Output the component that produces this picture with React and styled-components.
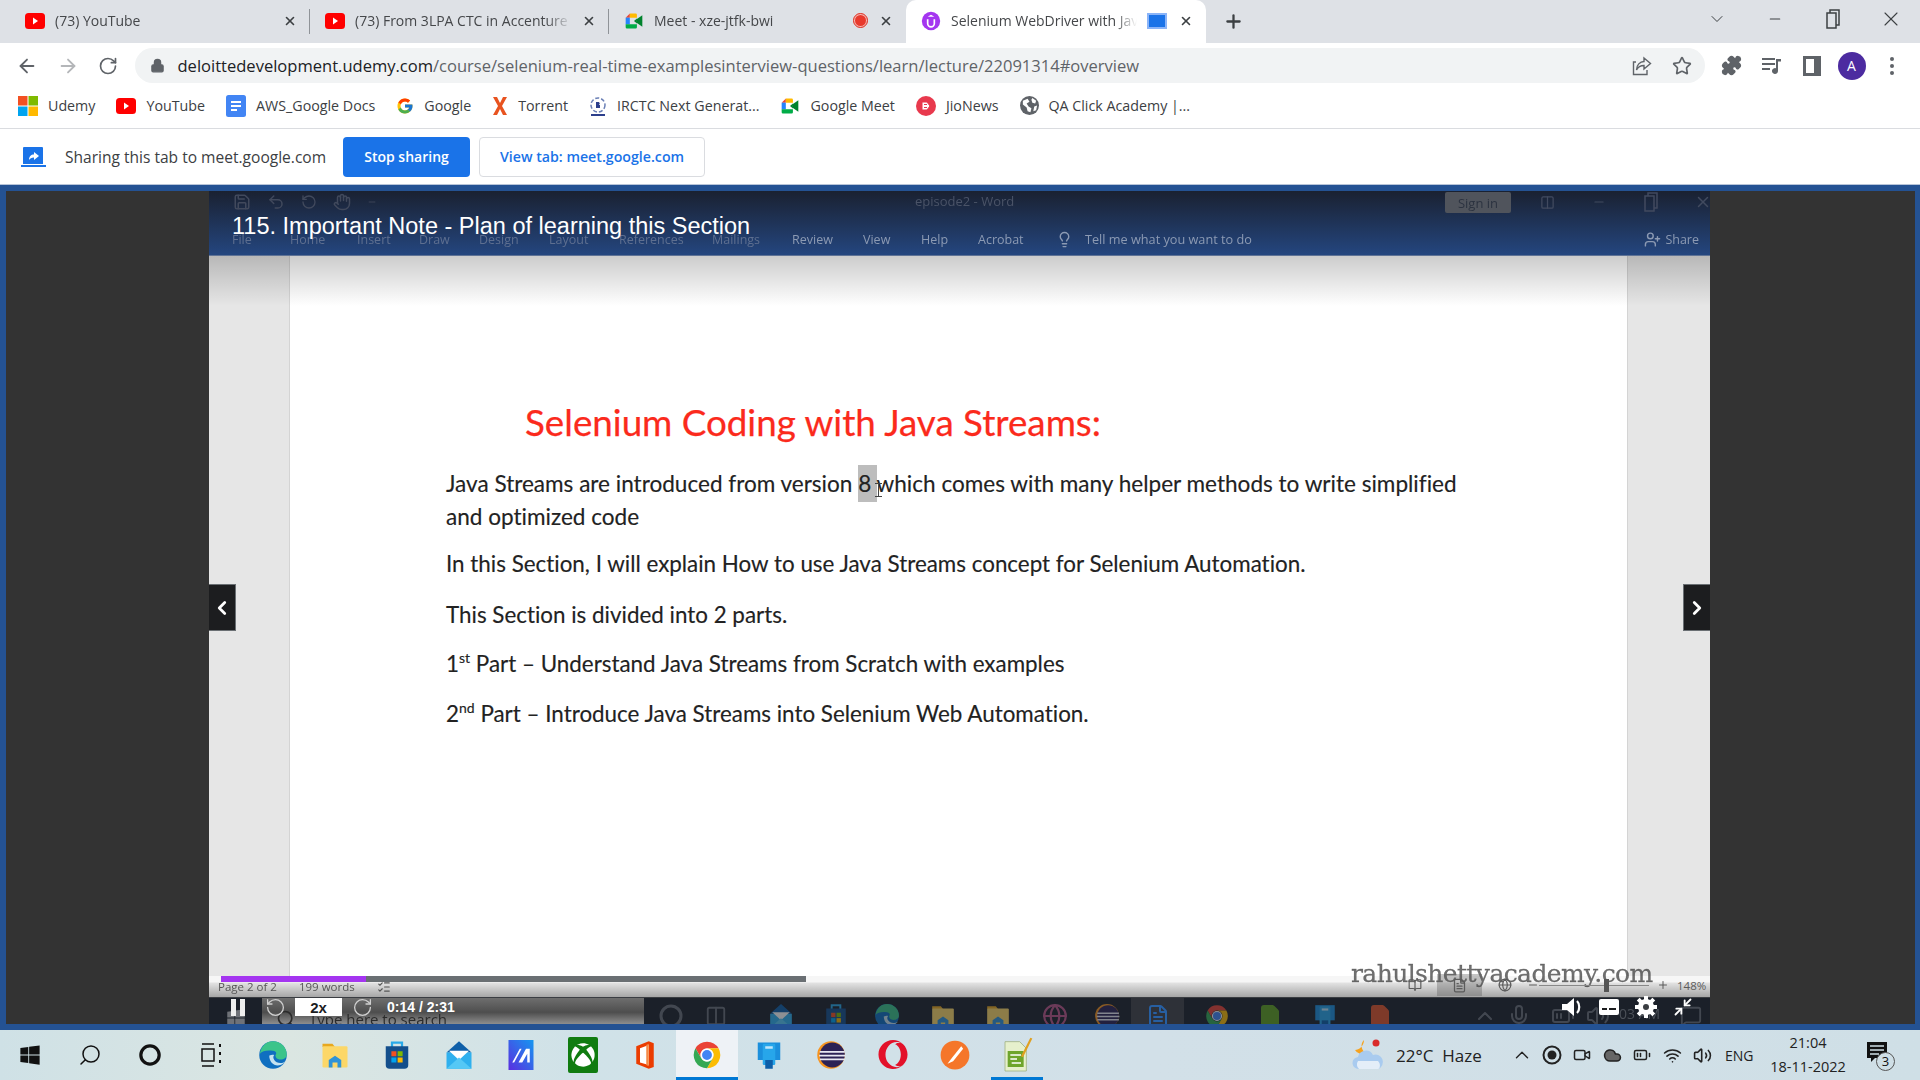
import React from "react";
import styled, { createGlobalStyle } from "styled-components";
import {
  ArrowLeft, ArrowRight, RotateCw, RotateCcw, Lock, Star, Puzzle, X, Plus, ChevronDown, ChevronUp, Minus,
  ChevronLeft, ChevronRight, Lightbulb, UserPlus, Save, Undo2, Hand, BookOpen, FileText, Globe, Search, Circle,
  Volume2, Mic, BatteryMedium, Wifi, Cloud, Video as VideoCam, MessageSquare, ListChecks, Columns2, Minimize2,
} from "lucide-react";
import { FaWindows, FaXbox, FaOpera } from "react-icons/fa";
import { FcGoogle } from "react-icons/fc";

const UI = `"Open Sans", "Noto Sans", sans-serif`;

const Global = createGlobalStyle`
  html, body { margin: 0; padding: 0; width: 1920px; height: 1080px; overflow: hidden; background: #fff; }
  * { box-sizing: border-box; }
  body { font-family: ${UI}; }
`;

const Page = styled.div`
  width: 1920px;
  height: 1080px;
  display: flex;
  flex-direction: column;
  overflow: hidden;
`;

/* ---------- tabs ---------- */
const TabStrip = styled.div`
  height: 43px;
  background: #dee1e6;
  display: flex;
  align-items: stretch;
`;
const Tab = styled.div`
  width: ${(p) => p.$w}px;
  padding: 0 13px 2px ${(p) => p.$pad}px;
  display: flex;
  align-items: center;
  gap: 10px;
  font-size: 14px;
  color: #45474a;
  position: relative;
  background: ${(p) => (p.$active ? "#fff" : "transparent")};
  border-radius: ${(p) => (p.$active ? "10px 10px 0 0" : "0")};
  &::after {
    content: "";
    display: ${(p) => (p.$sep ? "block" : "none")};
    position: absolute;
    right: 0;
    top: 9px;
    height: 25px;
    width: 1px;
    background: #8f9398;
  }
`;
const TabTitle = styled.span`
  flex: 1;
  min-width: 0;
  white-space: nowrap;
  overflow: hidden;
  -webkit-mask-image: linear-gradient(90deg, #000 88%, transparent 100%);
  mask-image: linear-gradient(90deg, #000 88%, transparent 100%);
`;
const TabClose = styled(X)`
  width: 14px;
  height: 14px;
  color: #3c4043;
  stroke-width: 2.8;
  flex: none;
`;
const RecDot = styled.span`
  width: 15px;
  height: 15px;
  flex: none;
  border-radius: 50%;
  background: #e8392c;
  border: 2px solid #f7b7b1;
  outline: 1px solid #d93025;
  outline-offset: -1px;
  margin-right: 1px;
`;
const ShareSquare = styled.span`
  width: 20px;
  height: 16px;
  flex: none;
  background: #1a73e8;
  border: 2px solid #8ab4f8;
  margin-right: 2px;
`;
const NewTab = styled(Plus)`
  width: 21px;
  height: 21px;
  color: #3c4043;
  stroke-width: 2.6;
  margin: 11px 0 0 17px;
`;
const WinControls = styled.div`
  margin-left: auto;
  display: flex;
  align-items: flex-start;
  padding: 9px 0 0 0;
  color: #3c4043;
`;
const WinSlot = styled.div`
  width: 58px;
  height: 20px;
  display: flex;
  align-items: center;
  justify-content: center;
`;

/* ---------- address row ---------- */
const NavRow = styled.div`
  height: 41px;
  padding: 5px 0 0 7px;
  background: #fff;
  display: flex;
  align-items: flex-start;
`;
const NavBtn = styled.div`
  width: 40.5px;
  height: 35px;
  display: flex;
  align-items: center;
  justify-content: center;
  color: ${(p) => (p.$off ? "#b4b6b9" : "#5f6368")};
`;
const Omnibox = styled.div`
  width: 1570px;
  height: 35px;
  margin-left: 6px;
  border-radius: 18px;
  background: #f1f3f4;
  display: flex;
  align-items: center;
  padding-left: 15px;
`;
const Url = styled.div`
  margin-left: 13px;
  font-size: 16.55px;
  color: #5f6368;
  white-space: nowrap;
  & b { font-weight: 400; color: #202124; }
`;
const OmniActions = styled.div`
  margin-left: auto;
  display: flex;
  color: #5f6368;
  padding-right: 3px;
`;
const OmniBtn = styled.div`
  width: 40px;
  height: 35px;
  display: flex;
  align-items: center;
  justify-content: center;
`;
const ToolBtns = styled.div`
  margin-left: 7px;
  display: flex;
  color: #5f6368;
`;
const Avatar = styled.div`
  width: 28px;
  height: 28px;
  border-radius: 50%;
  background: #4c2ba0;
  color: #fff;
  font-size: 14px;
  display: flex;
  align-items: center;
  justify-content: center;
`;

/* ---------- bookmarks ---------- */
const Bookmarks = styled.div`
  height: 45px;
  padding: 0 0 1px 18px;
  background: #fff;
  border-bottom: 1px solid #dadce0;
  display: flex;
  align-items: center;
  gap: 21px;
`;
const Bookmark = styled.div`
  display: flex;
  align-items: center;
  gap: 10px;
  font-size: 14.25px;
  color: #3c4043;
  white-space: nowrap;
`;

/* ---------- share bar ---------- */
const ShareBar = styled.div`
  height: 55px;
  background: #fff;
  display: flex;
  align-items: center;
  padding: 0 0 0 21px;
`;
const ShareText = styled.div`
  margin: 0 17px 0 19px;
  width: 261px;
  font-size: 15.55px;
  color: #3c4043;
  white-space: nowrap;
`;
const StopButton = styled.div`
  width: 127px;
  height: 40px;
  border-radius: 4px;
  background: #1a73e8;
  color: #fff;
  font-size: 14px;
  font-weight: 600;
  display: flex;
  align-items: center;
  justify-content: center;
`;
const ViewButton = styled.div`
  width: 226px;
  height: 40px;
  margin-left: 9px;
  border: 1px solid #dadce0;
  border-radius: 4px;
  color: #1a73e8;
  font-size: 14.2px;
  font-weight: 600;
  display: flex;
  align-items: center;
  justify-content: center;
`;

/* ---------- captured stage ---------- */
const Stage = styled.div`
  height: 846px;
  background: #245293;
  border-top: 1px solid #b7c4d8;
  padding: 6px 5px 6px 6px;
  display: flex;
`;
const SidePanel = styled.div`
  width: ${(p) => p.$w}px;
  background: #333;
`;
const Video = styled.div`
  width: 1501px;
  height: 833px;
  position: relative;
  overflow: hidden;
  display: flex;
  flex-direction: column;
`;
const Ribbon = styled.div`
  height: 65px;
  flex: none;
  background: linear-gradient(#1a2131, #24467f);
  border-bottom: 1px solid #5f7396;
  display: flex;
  flex-direction: column;
  filter: blur(0.45px);
`;
const RibbonTop = styled.div`
  height: 22px;
  position: relative;
  display: flex;
  align-items: center;
  padding: 0 0 0 24px;
  color: #41495c;
  gap: 16px;
  font-size: 13px;
`;
const DocName = styled.div`
  position: absolute;
  left: 706px;
  top: 1px;
  font-size: 13px;
  color: #4a5367;
`;
const SignIn = styled.div`
  position: absolute;
  left: 1236px;
  top: 1px;
  width: 66px;
  height: 21px;
  background: #50545c;
  color: #2c3340;
  border-radius: 2px;
  font-size: 13px;
  display: flex;
  align-items: center;
  justify-content: center;
`;
const RibbonWin = styled.div`
  position: absolute;
  left: 1312px;
  top: 3px;
  display: flex;
  color: #414a5f;
`;
const RibbonWinSlot = styled.div`
  width: 52px;
  height: 16px;
  display: flex;
  align-items: center;
  justify-content: center;
`;
const RibbonTabs = styled.div`
  display: flex;
  align-items: center;
  height: 20px;
  margin-top: 16px;
  padding-left: 23px;
  font-size: 12.5px;
  color: #8c9ab3;
`;
const RibbonTab = styled.div`
  width: ${(p) => p.$w}px;
  flex: none;
  white-space: nowrap;
  color: ${(p) => (p.$dim ? "#5e6f90" : "#8c9ab3")};
`;
const TellMe = styled.div`
  display: flex;
  align-items: center;
  gap: 12px;
  white-space: nowrap;
  margin-left: -8px;
  font-size: 12.7px;
`;
const RibbonShare = styled.div`
  margin-left: auto;
  margin-right: 11px;
  display: flex;
  align-items: center;
  gap: 4px;
`;

const Doc = styled.div`
  height: 720px;
  flex: none;
  position: relative;
  display: flex;
  background: #e6e6e6;
`;
const Sheet = styled.div`
  width: 1339px;
  margin-left: 80px;
  background: #fff;
  border-left: 1px solid #d4d4d4;
  border-right: 1px solid #d4d4d4;
  padding: 144px 0 0 156px;
  font-family: Lato, "Open Sans", sans-serif;
  font-variant-ligatures: none;
`;
const TopShade = styled.div`
  position: absolute;
  left: 0;
  right: 0;
  top: 0;
  height: 50px;
  background: linear-gradient(rgba(0, 0, 0, 0.2), rgba(0, 0, 0, 0));
`;
const Heading = styled.h1`
  margin: 0 0 0 79px;
  font-size: 36.75px;
  line-height: 44px;
  font-weight: 400;
  color: #fb2a1c;
  white-space: nowrap;
  -webkit-text-stroke: 0.25px #fb2a1c;
`;
const Para = styled.p`
  margin: ${(p) => p.$top}px 0 0;
  font-size: ${(p) => p.$size || 22.4}px;
  line-height: 33px;
  color: #222;
  white-space: nowrap;
  -webkit-text-stroke: 0.15px #222;
  & sup { font-size: 14px; line-height: 0; vertical-align: 9px; }
`;
const Selected = styled.span`
  background: #bdbdbd;
  padding: 5px 0;
`;
const IBeam = styled.span`
  position: absolute;
  left: 666px;
  top: 227px;
  width: 7px;
  height: 14px;
  border-top: 1px solid #444;
  border-bottom: 1px solid #444;
  &::after {
    content: "";
    position: absolute;
    left: 3px;
    top: 0;
    bottom: 0;
    width: 1px;
    background: #444;
  }
`;

const StatusBar = styled.div`
  height: 22px;
  flex: none;
  background: linear-gradient(#f6f6f6 6px, #e2e2e2 7px, #a6a6a6 100%);
  display: flex;
  align-items: center;
  padding: 0 0 0 9px;
  font-size: 11.5px;
  color: #555;
  filter: blur(0.3px);
  border-bottom: 1px solid #3a3d42;
`;
const StatusItem = styled.div`
  margin-right: 22px;
  white-space: nowrap;
`;
const StatusRight = styled.div`
  position: absolute;
  left: 1183px;
  top: 783px;
  height: 22px;
  display: flex;
  align-items: center;
  color: #5b5b5b;
  font-size: 11.5px;
`;
const ViewSlot = styled.div`
  width: ${(p) => p.$w}px;
  height: 22px;
  display: flex;
  align-items: center;
  justify-content: center;
  background: ${(p) => (p.$on ? "rgba(90,90,90,.35)" : "transparent")};
`;
const Slider = styled.div`
  width: 110px;
  height: 1px;
  background: #888;
  position: relative;
  &::after {
    content: "";
    position: absolute;
    left: 65px;
    top: -6px;
    width: 5px;
    height: 13px;
    background: #555;
  }
`;

const VTaskbar = styled.div`
  height: 26px;
  flex: none;
  display: flex;
  align-items: stretch;
  background: #1b2029;
  overflow: hidden;
  filter: blur(0.7px);
`;
const VStart = styled.div`
  width: 53px;
  display: flex;
  align-items: center;
  justify-content: center;
  padding-top: 14px;
  color: #6f7278;
`;
const VSearch = styled.div`
  width: 382px;
  background: linear-gradient(#6e6e6e, #4e4e4e 55%, #8e8e8e);
  display: flex;
  align-items: center;
  padding: 16px 0 0 14px;
  gap: 13px;
  color: #2b2b2b;
  font-size: 15px;
  white-space: nowrap;
`;
const VSlot = styled.div`
  width: 26px;
  flex: none;
  margin-left: ${(p) => p.$ml}px;
  display: flex;
  align-items: center;
  justify-content: center;
  padding-top: 10px;
  opacity: 0.5;
  color: #6a6f78;
  position: relative;
`;
const VActive = styled.div`
  width: 53px;
  margin: 0 -14px 0 ${(p) => p.$ml - 13}px;
  flex: none;
  background: #33363c;
  display: flex;
  align-items: center;
  justify-content: center;
  padding-top: 10px;
  opacity: 0.8;
`;
const VClock = styled.div`
  margin-left: 8px;
  padding-top: 6px;
  color: #4b5058;
  font-size: 14px;
  white-space: nowrap;
`;

const VideoTitle = styled.div`
  position: absolute;
  left: 23px;
  top: 20px;
  color: #fff;
  font-family: "Liberation Sans", Arial, sans-serif;
  font-size: 23.5px;
  line-height: 30px;
  white-space: nowrap;
`;
const SlideArrow = styled.div`
  position: absolute;
  top: 393px;
  ${(p) => p.$side}: 0;
  width: 27px;
  height: 47px;
  background: #1c1d1f;
  border: 1px solid #6a6f73;
  border-${(p) => p.$side}: 0;
  color: #fff;
  display: flex;
  align-items: center;
  justify-content: center;
`;
const ProgressTrack = styled.div`
  position: absolute;
  left: 12px;
  top: 785px;
  width: 585px;
  height: 6px;
  background: #6a6f73;
`;
const ProgressFill = styled.div`
  height: 100%;
  width: ${(p) => p.$pct}%;
  background: #a435f0;
`;
const Watermark = styled.div`
  position: absolute;
  left: 1142px;
  top: 768px;
  font-family: "DejaVu Serif", "Liberation Serif", serif;
  font-size: 25px;
  line-height: 30px;
  letter-spacing: -0.6px;
  color: rgba(55, 55, 55, 0.72);
  -webkit-text-stroke: 0.3px rgba(55, 55, 55, 0.6);
  white-space: nowrap;
  filter: blur(0.6px);
`;
const Controls = styled.div`
  position: absolute;
  left: 0;
  right: 0;
  bottom: 0;
  height: 34px;
  padding: 0 9px;
  display: flex;
  align-items: center;
  color: #fff;
`;
const CtlSlot = styled.div`
  width: ${(p) => p.$w}px;
  flex: none;
  height: 30px;
  display: flex;
  align-items: center;
  justify-content: center;
  color: ${(p) => p.$tone || "#fff"};
`;
const PauseBars = styled.div`
  width: 14px;
  height: 17px;
  border-left: 5px solid #eee;
  border-right: 5px solid #eee;
`;
const Speed = styled.div`
  width: 47px;
  height: 18px;
  background: #fff;
  color: #1c1d1f;
  font-family: "Liberation Sans", Arial, sans-serif;
  font-weight: 700;
  font-size: 15px;
  display: flex;
  align-items: center;
  justify-content: center;
  margin-left: 3px;
`;
const Time = styled.div`
  margin-left: 5px;
  font-family: "Liberation Sans", Arial, sans-serif;
  font-weight: 700;
  font-size: 14px;
  white-space: nowrap;
`;
const CtlRight = styled.div`
  margin-left: auto;
  display: flex;
`;
const Caption = styled.div`
  width: 20px;
  height: 16px;
  background: #fff;
  border-radius: 2px;
  padding: 9px 3px 0;
  &::after {
    content: "";
    display: block;
    height: 2px;
    background: linear-gradient(90deg, #1c1d1f 0 5px, transparent 5px 7px, #1c1d1f 7px);
  }
`;

/* ---------- windows taskbar ---------- */
const Taskbar = styled.div`
  height: 50px;
  display: flex;
  align-items: stretch;
  background: linear-gradient(90deg, #cfe1e6 0, #dbe6e2 15%, #d0e2e8 30%, #d2e0e8 60%, #cfdfe6 100%);
`;
const TaskSlot = styled.div`
  width: ${(p) => p.$w}px;
  margin: 0 ${(p) => p.$mx || 0}px;
  flex: none;
  display: flex;
  align-items: center;
  justify-content: center;
  color: #111;
  background: ${(p) => (p.$active ? "#eef2f6" : "transparent")};
  border-bottom: 3px solid ${(p) => (p.$under ? "#0078d4" : "transparent")};
  border-top: 3px solid transparent;
`;
const Tray = styled.div`
  flex: 1;
  display: flex;
  align-items: center;
  padding-left: 303px;
  color: #222;
`;
const Weather = styled.div`
  display: flex;
  align-items: center;
  gap: 11px;
  font-size: 17px;
  color: #222;
  width: 156px;
  white-space: nowrap;
`;
const TraySlot = styled.div`
  width: 30px;
  flex: none;
  display: flex;
  align-items: center;
  justify-content: center;
`;
const Lang = styled.div`
  margin-left: 8px;
  font-size: 14px;
  width: 38px;
`;
const Clock = styled.div`
  width: 90px;
  text-align: center;
  font-size: 14.5px;
  line-height: 24px;
  color: #222;
`;
const Notif = styled.div`
  margin-left: 14px;
  position: relative;
  width: 22px;
  height: 26px;
`;
const NotifBadge = styled.span`
  position: absolute;
  left: 9px;
  top: 10px;
  width: 19px;
  height: 19px;
  border-radius: 50%;
  border: 1px solid #555;
  background: #cfdfe6;
  font-size: 13px;
  line-height: 17px;
  text-align: center;
  color: #111;
`;

/* ---------- brand drawings ---------- */
const Yt = ({ s = 20 }) => (
  <svg width={s} height={s * 0.8} viewBox="0 0 20 16" style={{ flex: "none" }}>
    <rect width="20" height="16" rx="3.5" fill="#f00" />
    <path d="M8 4.5l5 3.5-5 3.5z" fill="#fff" />
  </svg>
);
const Meet = ({ s = 20 }) => (
  <svg width={s} height={s} viewBox="0 0 24 24" style={{ flex: "none" }}>
    <path d="M7 3 2 8h5z" fill="#ea4335" />
    <path d="M7 3h7a1.5 1.5 0 0 1 1.5 1.5V8H7z" fill="#ffba00" />
    <rect x="2" y="8" width="5" height="8" fill="#2684fc" />
    <path d="M2 16v3.5A1.5 1.5 0 0 0 3.5 21H14a1.5 1.5 0 0 0 1.5-1.5V16z" fill="#00ac47" />
    <path d="M15.5 9.5 22 5v14l-6.500-4.500z" fill="#00832d" />
    <path d="M12 12l3.500-3v6z" fill="#00832d" />
  </svg>
);
const UdemyFav = () => (
  <svg width="20" height="20" viewBox="0 0 24 24" style={{ flex: "none" }}>
    <circle cx="12" cy="12" r="11" fill="#a435f0" />
    <path d="M8 10v5a4 4 0 0 0 8 0v-5" fill="none" stroke="#fff" strokeWidth="2" />
    <path d="M12 4.500 16 7H8z" fill="#fff" />
  </svg>
);
const MsLogo = () => (
  <svg width="20" height="20" viewBox="0 0 20 20" style={{ flex: "none" }}>
    <rect width="9.500" height="9.500" fill="#f25022" />
    <rect x="10.500" width="9.500" height="9.500" fill="#7fba00" />
    <rect y="10.500" width="9.500" height="9.500" fill="#00a4ef" />
    <rect x="10.500" y="10.500" width="9.500" height="9.500" fill="#ffb900" />
  </svg>
);
const DocsIcon = () => (
  <svg width="20" height="22" viewBox="0 0 20 22" style={{ flex: "none" }}>
    <rect width="20" height="22" rx="2.500" fill="#4285f4" />
    <path d="M5 7h10M5 11h10M5 15h6" stroke="#fff" strokeWidth="2" />
  </svg>
);
const Torrent = () => (
  <svg width="16" height="20" viewBox="0 0 16 20" style={{ flex: "none" }}>
    <path d="M1 1h4l3 6 3-6h4l-5 9 5 9h-4l-3-6-3 6H1l5-9z" fill="#e8531f" />
  </svg>
);
const Irctc = () => (
  <svg width="18" height="22" viewBox="0 0 18 22" style={{ flex: "none" }}>
    <circle cx="9" cy="10" r="7" fill="none" stroke="#6a7fb5" strokeWidth="1.500" strokeDasharray="4 2" />
    <path d="M7 7h3a2 2 0 0 1 0 3H7zM7 10h4v3H7z" fill="#2d3f8c" />
    <path d="M2 20h14" stroke="#2d3f8c" strokeWidth="2" />
  </svg>
);
const Jio = () => (
  <svg width="20" height="20" viewBox="0 0 20 20" style={{ flex: "none" }}>
    <circle cx="10" cy="10" r="10" fill="#e8394d" />
    <path d="M6 6h5l3 4-3 4H6zM8 8.500h3M8 11.500h3" fill="#fff" stroke="#e8394d" strokeWidth="1" />
  </svg>
);
const QaGlobe = () => (
  <svg width="19" height="19" viewBox="0 0 20 20" style={{ flex: "none" }}>
    <circle cx="10" cy="10" r="10" fill="#5f6368" />
    <path d="M3 5l5-2 2 3-3 2 2 3 3 2-1 4-3-1-1-4-4-3zM13 2l4 3-1 3-3-1-1-3zM15 11l3-1-1 5-3 1z" fill="#fff" />
  </svg>
);
const ShareIcon = () => (
  <svg width="25" height="22" viewBox="0 0 25 22" style={{ flex: "none" }}>
    <path d="M3 1h18a1 1 0 0 1 1 1v16H2V2a1 1 0 0 1 1-1z" fill="#1a73e8" />
    <path d="M0 19h25v2H0z" fill="#1a73e8" />
    <path d="M13 6l5 4-5 4v-2.500c-2.500 0-4 1-5 2.500 0-3.500 2-5.500 5-5.500z" fill="#fff" />
  </svg>
);
const PageShare = () => (
  <svg width="20" height="20" viewBox="0 0 20 20" fill="none" stroke="#5f6368" strokeWidth="1.400" style={{ flex: "none" }}>
    <path d="M4 6H1.500v12.500H15V14" />
    <path d="M12 2l6.500 5.500L12 13V9.500C8.500 9.500 6 11 4.500 14 4.500 9 8 5.500 12 5.500z" />
  </svg>
);
const MediaIcon = () => (
  <svg width="20" height="18" viewBox="0 0 20 18" fill="#5f6368" style={{ flex: "none" }}>
    <path d="M0 1h13v2H0zM0 6h13v2H0zM0 11h8v2H0zM14 2h5v2.500h-3V14a3 3 0 1 1-2-2.800z" />
  </svg>
);
const SideIcon = () => (
  <svg width="18" height="20" viewBox="0 0 18 20" style={{ flex: "none" }}>
    <path d="M1.500 1.500h15v17h-15z" fill="none" stroke="#5f6368" strokeWidth="3" />
    <rect x="11" y="1.500" width="5.500" height="17" fill="#5f6368" />
  </svg>
);
const Kebab = () => (
  <svg width="4" height="18" viewBox="0 0 4 18" fill="#5f6368">
    <circle cx="2" cy="2" r="2" />
    <circle cx="2" cy="9" r="2" />
    <circle cx="2" cy="16" r="2" />
  </svg>
);
const Restore = () => (
  <svg width="14" height="22" viewBox="0 0 14 22" fill="none" stroke="currentColor" strokeWidth="1.500" style={{ flex: "none" }}>
    <path d="M1 5h9v15H1z" />
    <path d="M4 5V2h9v15h-3" />
  </svg>
);
const TaskView = () => (
  <svg width="24" height="26" viewBox="0 0 24 26" fill="none" stroke="#111" strokeWidth="1.500" style={{ flex: "none" }}>
    <path d="M3 2h12M3 24h12" />
    <rect x="3" y="7" width="12" height="12" />
    <path d="M21 2v3M21 10v3M21 18v3" strokeWidth="2" />
  </svg>
);
const Speaker = () => (
  <svg width="24" height="24" viewBox="0 0 24 24" style={{ flex: "none" }}>
    <path d="M2 9h5l7-6v18l-7-6H2z" fill="#fff" />
    <path d="M17 6c3 3 3 9 0 12" fill="none" stroke="#fff" strokeWidth="2.200" />
  </svg>
);
const Gear = () => (
  <svg width="24" height="24" viewBox="0 0 24 24" style={{ flex: "none" }}>
    <circle cx="12" cy="12" r="8" fill="#fff" />
    <path d="M12 1v22M1 12h22M4.200 4.200l15.600 15.600M19.800 4.200 4.200 19.800" stroke="#fff" strokeWidth="4" />
    <circle cx="12" cy="12" r="3" fill="#3a3d42" />
  </svg>
);
const Chrome = ({ s = 28 }) => (
  <svg width={s} height={s} viewBox="0 0 24 24" style={{ flex: "none" }}>
    <path d="M12 2A10 10 0 0 1 20.660 7H12a5 5 0 0 0-4.330 7.500L3.340 7A10 10 0 0 1 12 2z" fill="#ea4335" />
    <path d="M20.660 7A10 10 0 0 1 12 22l4.330-7.500A5 5 0 0 0 12 7z" fill="#fbbc04" />
    <path d="M12 22A10 10 0 0 1 3.340 7l4.330 7.500a5 5 0 0 0 8.660 0z" fill="#34a853" />
    <circle cx="12" cy="12" r="4.200" fill="#4285f4" stroke="#fff" strokeWidth="1" />
  </svg>
);
const Edge = ({ s = 30 }) => (
  <svg width={s} height={s} viewBox="0 0 24 24" style={{ flex: "none" }}>
    <circle cx="12" cy="12" r="11" fill="#0f6fc0" />
    <path d="M1.500 11C2.500 4.500 7 1 12 1c6 0 11 4.500 11 10.500 0 3-3 4.500-6 4-2.500-.4-3-2-3-3.500 1-1 1-3-2-3.500C7 8 3.500 8.500 1.500 11z" fill="#3cc48a" />
    <path d="M9 12.500c0 5 4 9 9 7.500 2-.7 3.500-2 4-3-3 2.500-7.500 1.500-9-1-1-1.500-1-3 0-4-2-.8-4 .5-4 .5z" fill="#cfe8f2" opacity=".95" />
  </svg>
);
const Folder = ({ s = 30 }) => (
  <svg width={s} height={s} viewBox="0 0 24 24" style={{ flex: "none" }}>
    <path d="M2 3h8l2 2.500H2z" fill="#e8a81f" />
    <rect x="2" y="5" width="20" height="17" rx="1" fill="#fcd768" />
    <path d="M7 22v-6l5-3.500 5 3.500v6h-3v-4h-4v4z" fill="#2f93d8" />
  </svg>
);
const Store = ({ s = 30 }) => (
  <svg width={s} height={s} viewBox="0 0 24 24" style={{ flex: "none" }}>
    <path d="M8 6V2h8v4" fill="none" stroke="#29a9e8" strokeWidth="1.800" />
    <path d="M3 5h18v15a3 3 0 0 1-3 3H6a3 3 0 0 1-3-3z" fill="#144f8c" />
    <rect x="7.500" y="9" width="4" height="4" fill="#f25022" />
    <rect x="12.500" y="9" width="4" height="4" fill="#7fba00" />
    <rect x="7.500" y="14" width="4" height="4" fill="#00a4ef" />
    <rect x="12.500" y="14" width="4" height="4" fill="#ffb900" />
  </svg>
);
const Mail = ({ s = 30 }) => (
  <svg width={s} height={s} viewBox="0 0 24 24" style={{ flex: "none" }}>
    <path d="M12 1 2 10h20z" fill="#0f5fa8" />
    <path d="M2 10h20v13H2z" fill="#2fb0ee" />
    <path d="M4 8.500h16L12 16z" fill="#fff" />
    <path d="M2 23 12 14l10 9z" fill="#55c8f5" />
  </svg>
);
const Design = ({ s = 30 }) => (
  <svg width={s} height={s} viewBox="0 0 24 24" style={{ flex: "none" }}>
    <defs>
      <linearGradient id="dsg" x1="0" y1="1" x2="1" y2="0">
        <stop offset="0" stopColor="#5b2ee0" />
        <stop offset="1" stopColor="#1597f0" />
      </linearGradient>
    </defs>
    <rect x="2" width="20" height="24" fill="url(#dsg)" />
    <path d="M5 18 11 7h1.500l-6 11zM10 18l6-11h3v11h-2v-7l-4 7z" fill="#fff" />
  </svg>
);
const XboxTile = styled.span`
  width: 30px;
  height: 36px;
  background: #107c10;
  display: flex;
  align-items: center;
  justify-content: center;
  border-radius: 2px;
  color: #fff;
`;
const Office = ({ s = 30 }) => (
  <svg width={s} height={s} viewBox="0 0 24 24" style={{ flex: "none" }}>
    <path d="M5 5 15 1l4 1.500v19L15 23 5 19z" fill="#eb3c00" />
    <path d="M8 6.500 15 4v16l-7-2z" fill="#fff" />
    <path d="M13 4 15 3v18l-2-1z" fill="#f58a46" />
  </svg>
);
const BlueApp = ({ s = 30 }) => (
  <svg width={s} height={s} viewBox="0 0 24 24" style={{ flex: "none" }}>
    <rect x="3" y="2" width="18" height="14" fill="#1b8fdc" />
    <rect x="7" y="3" width="10" height="17" rx="1" fill="#27a6ea" />
    <rect x="9" y="5" width="6" height="2" fill="#bfe6fb" />
    <rect x="9" y="16" width="6" height="7" fill="#0d5ea8" />
  </svg>
);
const Eclipse = ({ s = 30 }) => (
  <svg width={s} height={s} viewBox="0 0 24 24" style={{ flex: "none" }}>
    <circle cx="12" cy="12" r="11" fill="#f7941e" />
    <circle cx="13" cy="12" r="10" fill="#2c2255" />
    <path d="M3 9.500h20M2.500 12.500h21M3 15.500h20" stroke="#e8e8f2" strokeWidth="1.500" />
  </svg>
);
const Pencil = ({ s = 30 }) => (
  <svg width={s} height={s} viewBox="0 0 24 24" style={{ flex: "none" }}>
    <circle cx="12" cy="12" r="11.500" fill="#f5762a" />
    <path d="M17 5 9 15l-3 4 4.500-2L18.500 7z" fill="#fff" />
  </svg>
);
const NotepadPP = () => (
  <svg width="32" height="38" viewBox="0 0 24 28" style={{ flex: "none" }}>
    <path d="M3 4h11l5 5v17H3z" fill="#e6f0cc" stroke="#a0b080" strokeWidth=".6" />
    <path d="M5 11h12v12H5z" fill="#6ea52c" />
    <path d="M7 14h8M7 17h5M8 20h7" stroke="#fff" strokeWidth="1.300" />
    <path d="M22 1l1.500.7-7 14-1.500-.7z" fill="#e0a020" />
  </svg>
);
const WeatherIcon = () => (
  <svg width="34" height="36" viewBox="0 0 34 36" style={{ flex: "none" }}>
    <path d="M13 3a8 8 0 0 0 2 13 8 8 0 0 1-11-3C8 13 13 9 13 3z" fill="#f6a21e" />
    <circle cx="25" cy="6" r="3.500" fill="#d92b2b" />
    <path d="M8 32a6 6 0 0 1-1-12 8 8 0 0 1 15-2 7 7 0 0 1 5 14z" fill="#a9cbef" />
    <path d="M8 32a6 6 0 0 1-1-8h20c3 3 2 8 0 8z" fill="#e4eef8" />
  </svg>
);
const RecordIcon = () => (
  <svg width="20" height="20" viewBox="0 0 20 20">
    <circle cx="10" cy="10" r="8.500" fill="none" stroke="#222" strokeWidth="2" />
    <circle cx="10" cy="10" r="4.500" fill="#222" />
  </svg>
);
const NotifIcon = () => (
  <svg width="20" height="22" viewBox="0 0 20 22">
    <path d="M0 0h20v16H8l-4 4v-4H0z" fill="#111" />
    <path d="M3 4h14M3 8h14M3 12h9" stroke="#cfdfe6" strokeWidth="1.300" />
  </svg>
);

const ribbonTabs = [
  ["File", 58], ["Home", 67], ["Insert", 62], ["Draw", 60], ["Design", 70], ["Layout", 70],
  ["References", 93], ["Mailings", 80], ["Review", 71], ["View", 58], ["Help", 57], ["Acrobat", 86],
];

const vIcons = [
  [14, <Circle size={24} strokeWidth={3} />],
  [19, <Columns2 size={22} />],
  [39, <Mail s={26} />],
  [29, <Store s={26} />],
  [25, <Edge s={26} />],
  [30, <Folder s={26} />],
  [29, <Folder s={26} />],
  [31, <Globe size={26} color="#b58" />],
  [26, <Eclipse s={26} />],
];

export default function App() {
  return (
    <Page>
      <Global />
      <TabStrip>
        <Tab $w={310} $pad={25} $sep>
          <Yt />
          <TabTitle>(73) YouTube</TabTitle>
          <TabClose />
        </Tab>
        <Tab $w={299} $pad={15} $sep>
          <Yt />
          <TabTitle>(73) From 3LPA CTC in Accenture | Interview</TabTitle>
          <TabClose />
        </Tab>
        <Tab $w={297} $pad={15}>
          <Meet />
          <TabTitle>Meet - xze-jtfk-bwi</TabTitle>
          <RecDot />
          <TabClose />
        </Tab>
        <Tab $w={300} $pad={15} $active>
          <UdemyFav />
          <TabTitle>Selenium WebDriver with Java - Basics to Advanced</TabTitle>
          <ShareSquare />
          <TabClose />
        </Tab>
        <NewTab />
        <WinControls>
          <WinSlot><ChevronDown size={20} strokeWidth={1.2} /></WinSlot>
          <WinSlot><Minus size={16} strokeWidth={1.8} /></WinSlot>
          <WinSlot><Restore /></WinSlot>
          <WinSlot><X size={24} strokeWidth={1.1} /></WinSlot>
        </WinControls>
      </TabStrip>

      <NavRow>
        <NavBtn><ArrowLeft size={22} /></NavBtn>
        <NavBtn $off><ArrowRight size={22} /></NavBtn>
        <NavBtn><RotateCw size={20} /></NavBtn>
        <Omnibox>
          <Lock size={15} fill="#5f6368" color="#5f6368" />
          <Url>
            <b>deloittedevelopment.udemy.com</b>/course/selenium-real-time-examplesinterview-questions/learn/lecture/22091314#overview
          </Url>
          <OmniActions>
            <OmniBtn><PageShare /></OmniBtn>
            <OmniBtn><Star size={20} /></OmniBtn>
          </OmniActions>
        </Omnibox>
        <ToolBtns>
          <OmniBtn><Puzzle size={21} fill="#5f6368" /></OmniBtn>
          <OmniBtn><MediaIcon /></OmniBtn>
          <OmniBtn><SideIcon /></OmniBtn>
          <OmniBtn><Avatar>A</Avatar></OmniBtn>
          <OmniBtn><Kebab /></OmniBtn>
        </ToolBtns>
      </NavRow>

      <Bookmarks>
        <Bookmark><MsLogo />Udemy</Bookmark>
        <Bookmark><Yt />YouTube</Bookmark>
        <Bookmark><DocsIcon />AWS_Google Docs</Bookmark>
        <Bookmark><FcGoogle size={18} />Google</Bookmark>
        <Bookmark><Torrent />Torrent</Bookmark>
        <Bookmark><Irctc />IRCTC Next Generat...</Bookmark>
        <Bookmark><Meet />Google Meet</Bookmark>
        <Bookmark><Jio />JioNews</Bookmark>
        <Bookmark><QaGlobe />QA Click Academy |...</Bookmark>
      </Bookmarks>

      <ShareBar>
        <ShareIcon />
        <ShareText>Sharing this tab to meet.google.com</ShareText>
        <StopButton>Stop sharing</StopButton>
        <ViewButton>View tab: meet.google.com</ViewButton>
      </ShareBar>

      <Stage>
        <SidePanel $w={203} />
        <Video>
          <Ribbon>
            <RibbonTop>
              <Save size={18} />
              <Undo2 size={18} />
              <RotateCcw size={16} />
              <Hand size={18} />
              <Minus size={10} />
              <DocName>episode2 - Word</DocName>
              <SignIn>Sign in</SignIn>
              <RibbonWin>
                <RibbonWinSlot><Columns2 size={15} /></RibbonWinSlot>
                <RibbonWinSlot><Minus size={14} /></RibbonWinSlot>
                <RibbonWinSlot><Restore /></RibbonWinSlot>
                <RibbonWinSlot><X size={18} /></RibbonWinSlot>
              </RibbonWin>
            </RibbonTop>
            <RibbonTabs>
              {ribbonTabs.map(([t, w], i) => (
                <RibbonTab key={t} $w={w} $dim={i < 8}>{t}</RibbonTab>
              ))}
              <TellMe>
                <Lightbulb size={17} />
                Tell me what you want to do
              </TellMe>
              <RibbonShare>
                <UserPlus size={17} />
                Share
              </RibbonShare>
            </RibbonTabs>
          </Ribbon>

          <Doc>
            <Sheet>
              <Heading>Selenium Coding with Java Streams:</Heading>
              <Para $top={23} $size={22.55}>
                Java Streams are introduced from version <Selected>8 </Selected>which comes with many helper methods to write simplified
                <br />
                and optimized code
              </Para>
              <Para $top={14}>In this Section, I will explain How to use Java Streams concept for Selenium Automation.</Para>
              <Para $top={18}>This Section is divided into 2 parts.</Para>
              <Para $top={16}>1<sup>st</sup> Part – Understand Java Streams from Scratch with examples</Para>
              <Para $top={17}>2<sup>nd</sup> Part – Introduce Java Streams into Selenium Web Automation.</Para>
            </Sheet>
            <IBeam />
            <TopShade />
          </Doc>

          <StatusBar>
            <StatusItem>Page 2 of 2</StatusItem>
            <StatusItem>199 words</StatusItem>
            <ListChecks size={14} />
          </StatusBar>

          <VTaskbar>
            <VStart><FaWindows size={20} /></VStart>
            <VSearch><Search size={20} />Type here to search</VSearch>
            {vIcons.map(([ml, icon], i) => (
              <VSlot key={i} $ml={ml}>{icon}</VSlot>
            ))}
            <VActive $ml={24}><FileText size={24} color="#2b6fc0" /></VActive>
            <VSlot $ml={34}><Chrome s={26} /></VSlot>
            <VSlot $ml={27}><FileText size={24} color="#5fa020" fill="#5fa020" /></VSlot>
            <VSlot $ml={29}><BlueApp s={26} /></VSlot>
            <VSlot $ml={29}><FileText size={24} color="#e0552a" fill="#e0552a" /></VSlot>
            <VSlot $ml={79}><ChevronUp size={24} /></VSlot>
            <VSlot $ml={8}><Mic size={24} /></VSlot>
            <VSlot $ml={18}><BatteryMedium size={24} /></VSlot>
            <VSlot $ml={9}><Volume2 size={24} /></VSlot>
            <VClock>03 AM</VClock>
            <VSlot $ml={18}><MessageSquare size={22} /></VSlot>
          </VTaskbar>

          <VideoTitle>115. Important Note - Plan of learning this Section</VideoTitle>
          <SlideArrow $side="left"><ChevronLeft size={22} strokeWidth={3} /></SlideArrow>
          <SlideArrow $side="right"><ChevronRight size={22} strokeWidth={3} /></SlideArrow>
          <Watermark>rahulshettyacademy.com</Watermark>
          <ProgressTrack><ProgressFill $pct={24.8} /></ProgressTrack>
          <StatusRight>
            <ViewSlot $w={45}><BookOpen size={14} /></ViewSlot>
            <ViewSlot $w={45} $on><FileText size={15} /></ViewSlot>
            <ViewSlot $w={45}><Globe size={14} /></ViewSlot>
            <Minus size={12} />
            <Slider />
            <Plus size={12} style={{ margin: "0 8px" }} />
            148%
          </StatusRight>
          <Controls>
            <CtlSlot $w={40}><PauseBars /></CtlSlot>
            <CtlSlot $w={34} $tone="#cfcfcf"><RotateCcw size={21} strokeWidth={1.5} /></CtlSlot>
            <Speed>2x</Speed>
            <CtlSlot $w={40} $tone="#cfcfcf"><RotateCw size={21} strokeWidth={1.5} /></CtlSlot>
            <Time>0:14 / 2:31</Time>
            <CtlRight>
              <CtlSlot $w={37}><Speaker /></CtlSlot>
              <CtlSlot $w={37}><Caption /></CtlSlot>
              <CtlSlot $w={37}><Gear /></CtlSlot>
              <CtlSlot $w={37}><Minimize2 size={20} strokeWidth={2.2} /></CtlSlot>
            </CtlRight>
          </Controls>
        </Video>
        <SidePanel $w={205} />
      </Stage>

      <Taskbar>
        <TaskSlot $w={60}><FaWindows size={22} /></TaskSlot>
        <TaskSlot $w={60}><Search size={24} strokeWidth={1.5} style={{ transform: "scaleX(-1)" }} /></TaskSlot>
        <TaskSlot $w={60}><Circle size={22} strokeWidth={3.5} /></TaskSlot>
        <TaskSlot $w={62}><TaskView /></TaskSlot>
        <TaskSlot $w={62}><Edge /></TaskSlot>
        <TaskSlot $w={62}><Folder /></TaskSlot>
        <TaskSlot $w={62}><Store /></TaskSlot>
        <TaskSlot $w={62}><Mail /></TaskSlot>
        <TaskSlot $w={62}><Design /></TaskSlot>
        <TaskSlot $w={62}><XboxTile><FaXbox size={24} /></XboxTile></TaskSlot>
        <TaskSlot $w={62}><Office /></TaskSlot>
        <TaskSlot $w={62} $active $under><Chrome s={32} /></TaskSlot>
        <TaskSlot $w={62}><BlueApp /></TaskSlot>
        <TaskSlot $w={62}><Eclipse /></TaskSlot>
        <TaskSlot $w={62}><FaOpera size={30} color="#e3112a" /></TaskSlot>
        <TaskSlot $w={62}><Pencil /></TaskSlot>
        <TaskSlot $w={52} $mx={5} $under><NotepadPP /></TaskSlot>
        <Tray>
          <Weather><WeatherIcon />22°C&nbsp;&nbsp;Haze</Weather>
          <TraySlot><ChevronUp size={22} strokeWidth={1.5} /></TraySlot>
          <TraySlot><RecordIcon /></TraySlot>
          <TraySlot><VideoCam size={18} /></TraySlot>
          <TraySlot><Cloud size={19} fill="#666" /></TraySlot>
          <TraySlot><BatteryMedium size={18} /></TraySlot>
          <TraySlot><Wifi size={19} /></TraySlot>
          <TraySlot><Volume2 size={19} /></TraySlot>
          <Lang>ENG</Lang>
          <Clock>21:04<br />18-11-2022</Clock>
          <Notif>
            <NotifIcon />
            <NotifBadge>3</NotifBadge>
          </Notif>
        </Tray>
      </Taskbar>
    </Page>
  );
}
